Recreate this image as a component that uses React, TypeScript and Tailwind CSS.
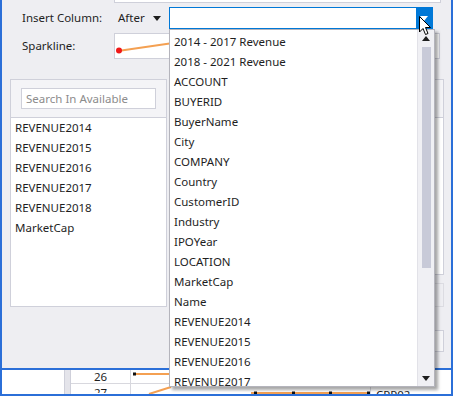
import { ReactNode } from "react";

const available = ["REVENUE2014", "REVENUE2015", "REVENUE2016", "REVENUE2017", "REVENUE2018", "MarketCap"];

const columns = [
  "2014 - 2017 Revenue",
  "2018 - 2021 Revenue",
  "ACCOUNT",
  "BUYERID",
  "BuyerName",
  "City",
  "COMPANY",
  "Country",
  "CustomerID",
  "Industry",
  "IPOYear",
  "LOCATION",
  "MarketCap",
  "Name",
  "REVENUE2014",
  "REVENUE2015",
  "REVENUE2016",
  "REVENUE2017",
  "REVENUE2018",
];

function Triangle({ up, className }: { up?: boolean; className?: string }) {
  return (
    <svg width="8" height="5" viewBox="0 0 8 5" className={className}>
      {up ? <path d="M0 5 L4 0 L8 5 Z" fill="currentColor" /> : <path d="M0 0 L8 0 L4 5 Z" fill="currentColor" />}
    </svg>
  );
}

function Row({ children, className }: { children: ReactNode; className?: string }) {
  return <div className={"flex items-center " + (className ?? "")}>{children}</div>;
}

export default function App() {
  return (
    <div className="relative w-[453px] h-[396px] overflow-hidden bg-white font-['Noto_Sans',sans-serif] text-[11.5px] text-[#1e1e1e] border-x-2 border-b-2 border-[#2b6fd8]">
      {/* dialog */}
      <div className="h-[370px] bg-[#eeeef2] border-b-2 border-[#2b6fd8] flex flex-col">
        <div className="h-[3px] ml-[112px] mr-[10px] bg-white border-x border-b border-[#cfd0da]" />

        <Row className="mt-[4px] h-[22px] pl-[20px]">
          <span className="w-[96px]">Insert Column:</span>
          <div className="w-[51px] flex items-center">
            <span>After</span>
            <Triangle className="ml-[8px] text-[#1e1e1e]" />
          </div>
          <div className="w-[264px] h-full bg-white border border-[#0078d7] flex justify-end">
            <div className="w-[16px] h-full bg-[#0078d7] flex items-center justify-center">
              <Triangle className="text-white" />
            </div>
          </div>
        </Row>

        <Row className="mt-[4px] h-[26px] pl-[20px]">
          <span className="w-[92px]">Sparkline:</span>
          <div className="w-[326px] h-full bg-white border border-[#cfd0da]">
            <svg width="324" height="24" viewBox="0 0 324 24">
              <path d="M3 17 L120 0" stroke="#f4a052" strokeWidth="2" fill="none" />
              <circle cx="4" cy="16.5" r="3" fill="#f01818" />
            </svg>
          </div>
        </Row>

        <div className="mt-[20px] flex pl-[8px] pr-[7px]">
          <div className="w-[157px] h-[228px] bg-[#f4f4f7] border border-[#cfd0da] flex flex-col">
            <div className="mt-[8px] mx-[10px] h-[21px] bg-white border border-[#cfd0da] flex items-center pl-[4px] text-[#8c8c8c]">
              Search In Available
            </div>
            <div className="mt-[8px] flex-1 bg-white border-t border-[#cfd0da] pl-[4px]">
              {available.map((a) => (
                <div key={a} className="leading-[20px]">
                  {a}
                </div>
              ))}
            </div>
          </div>

          <div className="ml-auto w-[157px] flex flex-col">
            <div className="h-[196px] bg-[#f4f4f7] border border-[#cfd0da] flex flex-col">
              <div className="mt-[8px] mx-[10px] h-[21px] bg-white border border-[#cfd0da]" />
              <div className="mt-[8px] flex-1 bg-white border-t border-[#cfd0da]" />
            </div>
            <div className="mt-[8px] h-[24px] border border-[#dcdce2] flex items-center justify-end pr-[11px] text-[#a8a8b0]">
              Move Row
            </div>
            <div className="mt-[23px] h-[22px] border border-[#cfd0da] bg-[#f6f6f8]" />
          </div>
        </div>
      </div>

      {/* grid behind the dialog */}
      <div className="flex h-[24px] overflow-hidden">
        <div className="w-[62px] bg-white" />
        <div className="w-[7px] bg-[#e4e4ea] border-x border-[#cfd0da]" />
        <div className="w-[60px] flex flex-col border-r border-[#d8d8de]">
          <div className="h-[14px] shrink-0 border-b border-[#d8d8de] flex items-center justify-center leading-none">26</div>
          <div className="h-[9px] shrink-0 overflow-hidden flex items-start justify-center pt-[3px] leading-none">27</div>
        </div>
        <div className="w-[240px] border-r border-[#d8d8de]">
          <svg width="240" height="24" viewBox="0 0 240 24" className="block">
            <line x1="0" y1="13.5" x2="240" y2="13.5" stroke="#d8d8de" />
            <path d="M3 4 L40 4" stroke="#f4a052" strokeWidth="2" />
            <rect x="2" y="2.5" width="3" height="3" fill="#111" />
            <path d="M18 24 L40 17" stroke="#f4a052" strokeWidth="2" />
            <path d="M120 23 L238 23" stroke="#f4a052" strokeWidth="2" />
            <rect x="123" y="21.5" width="3" height="3" fill="#111" />
            <rect x="161" y="21.5" width="3" height="3" fill="#111" />
            <rect x="198" y="21.5" width="3" height="3" fill="#111" />
            <rect x="236" y="21.5" width="3" height="3" fill="#111" />
          </svg>
        </div>
        <div className="flex-1 h-[24px] overflow-hidden pl-[5px] pt-[19px] leading-none">CPP02</div>
      </div>

      {/* open dropdown */}
      <div className="absolute left-[167px] top-[29px] w-[266px] h-[358px] bg-white border border-[#b4b4bc] shadow-[3px_3px_3px_rgba(0,0,0,0.35)] flex">
        <div className="flex-1 pt-[2px] pl-[4px] overflow-hidden">
          {columns.map((c) => (
            <div key={c} className="leading-[20px] whitespace-nowrap">
              {c}
            </div>
          ))}
        </div>
        <div className="w-[17px] bg-[#f0f0f4] border-l border-[#e2e2e8] flex flex-col items-center">
          <Triangle up className="mt-[6px] text-[#1e1e1e]" />
          <div className="mt-[6px] w-[9px] h-[221px] bg-[#c8cad8]" />
          <Triangle className="mt-auto mb-[5px] text-[#1e1e1e]" />
        </div>
      </div>

      {/* mouse cursor */}
      <svg width="13" height="20" viewBox="0 0 13 20" className="absolute left-[417px] top-[16px]">
        <path d="M0.5 0.5 L0.5 16 L4 12.5 L6.5 18.5 L9 17.5 L6.5 11.5 L11.5 11.5 Z" fill="white" stroke="black" strokeWidth="1" strokeLinejoin="miter" />
      </svg>
    </div>
  );
}
